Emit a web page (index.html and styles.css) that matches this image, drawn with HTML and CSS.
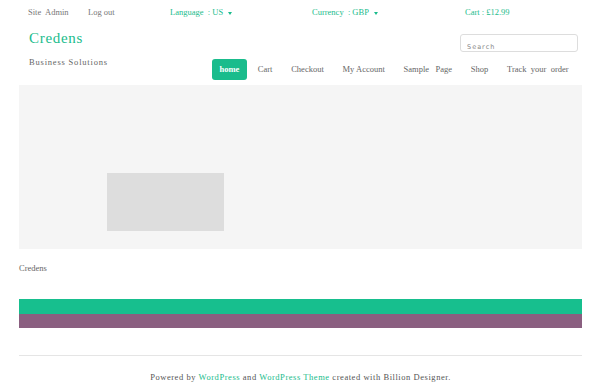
FILE: index.html
```html
<!DOCTYPE html>
<html>
<head>
    <meta charset="UTF-8">
    <title>Credens</title>
    <link rel="stylesheet" href="styles.css">
</head>
<body>
    <div class="page">
        <div class="top-bar">
            <a class="top-link site-admin">Site&nbsp; Admin</a>
            <a class="top-link logout">Log out</a>
            <div class="top-drop language">Language &nbsp;: US <span class="caret"></span></div>
            <div class="top-drop currency">Currency &nbsp;: GBP <span class="caret"></span></div>
            <div class="top-drop cart">Cart : £12.99</div>
        </div>
        <div class="header">
            <div class="header-row">
                <div class="logo">Credens</div>
                <input class="search" type="text" placeholder="Search">
            </div>
            <div class="header-row nav-row">
                <div class="tagline">Business Solutions</div>
                <div class="nav">
                    <a class="nav-item active">home</a>
                    <a class="nav-item">Cart</a>
                    <a class="nav-item">Checkout</a>
                    <a class="nav-item">My Account</a>
                    <a class="nav-item">Sample&nbsp;&nbsp; Page</a>
                    <a class="nav-item">Shop</a>
                    <a class="nav-item">Track&nbsp; your&nbsp; order</a>
                </div>
            </div>
        </div>
        <div class="hero">
            <div class="hero-img"></div>
        </div>
        <div class="site-name">Credens</div>
        <div class="bar bar-green"></div>
        <div class="bar bar-purple"></div>
        <div class="footer">
            Powered by <a>WordPress</a> and <a>WordPress Theme</a> created with Billion Designer.
        </div>
    </div>
</body>
</html>
```

FILE: styles.css
```css
*{
    margin: 0;
    padding: 0;
    box-sizing: border-box;
}
body{
    font-family: "Liberation Serif", "Times New Roman", serif;
    font-size: 8.5px;
    color: #666666;
    background-color: #ffffff;
}
.page{
    width: 563px;
    margin-left: 19px;
}
.top-bar{
    display: flex;
    height: 24px;
    align-items: center;
    padding-left: 9px;
}
.top-link{
    color: #777777;
}
.site-admin{
    width: 60px;
}
.logout{
    width: 82px;
}
.top-drop{
    color: #1abc8c;
}
.language{
    width: 142px;
}
.currency{
    width: 153px;
}
.caret{
    display: inline-block;
    width: 0;
    height: 0;
    margin-left: 3px;
    vertical-align: middle;
    border-left: 2.5px solid transparent;
    border-right: 2.5px solid transparent;
    border-top: 3px solid #1abc8c;
}
.header{
    padding: 0 4px 0 10px;
}
.header-row{
    display: flex;
    justify-content: space-between;
    align-items: center;
}
.logo{
    font-size: 15px;
    letter-spacing: 0.7px;
    color: #1abc8c;
    padding-top: 6px;
    height: 30px;
}
.search{
    width: 118px;
    height: 18px;
    margin-top: 7px;
    border: 1px solid #dddddd;
    border-radius: 3px;
    padding: 8px 6px 0;
    font-family: "DejaVu Sans", sans-serif;
    font-size: 6.5px;
    letter-spacing: 1px;
    outline: none;
}
.search::placeholder{
    color: #888888;
}
.nav-row{
    align-items: flex-start;
    height: 31px;
}
.tagline{
    letter-spacing: 0.8px;
    padding-top: 3px;
}
.nav{
    display: flex;
    align-items: center;
    margin-top: 5px;
}
.nav-item{
    color: #666666;
    line-height: 21px;
    padding: 0 9.4px;
}
.nav-item.active{
    background-color: #1abc8c;
    color: #ffffff;
    font-weight: bold;
    border-radius: 3px;
    padding: 0 8px;
    margin-right: 1px;
}
.hero{
    height: 164px;
    background-color: #f5f5f5;
    padding: 88px 0 0 88px;
}
.hero-img{
    width: 117px;
    height: 58px;
    background-color: #dddddd;
}
.site-name{
    padding-top: 14px;
    height: 50px;
}
.bar{
    height: 15px;
}
.bar-green{
    background-color: #17bf8e;
}
.bar-purple{
    height: 14px;
    background-color: #8a5f80;
}
.footer{
    margin-top: 27px;
    border-top: 1px solid #e5e5e5;
    text-align: center;
    letter-spacing: 0.55px;
    padding-top: 16px;
    color: #555555;
}
.footer a{
    color: #1abc8c;
}
```
